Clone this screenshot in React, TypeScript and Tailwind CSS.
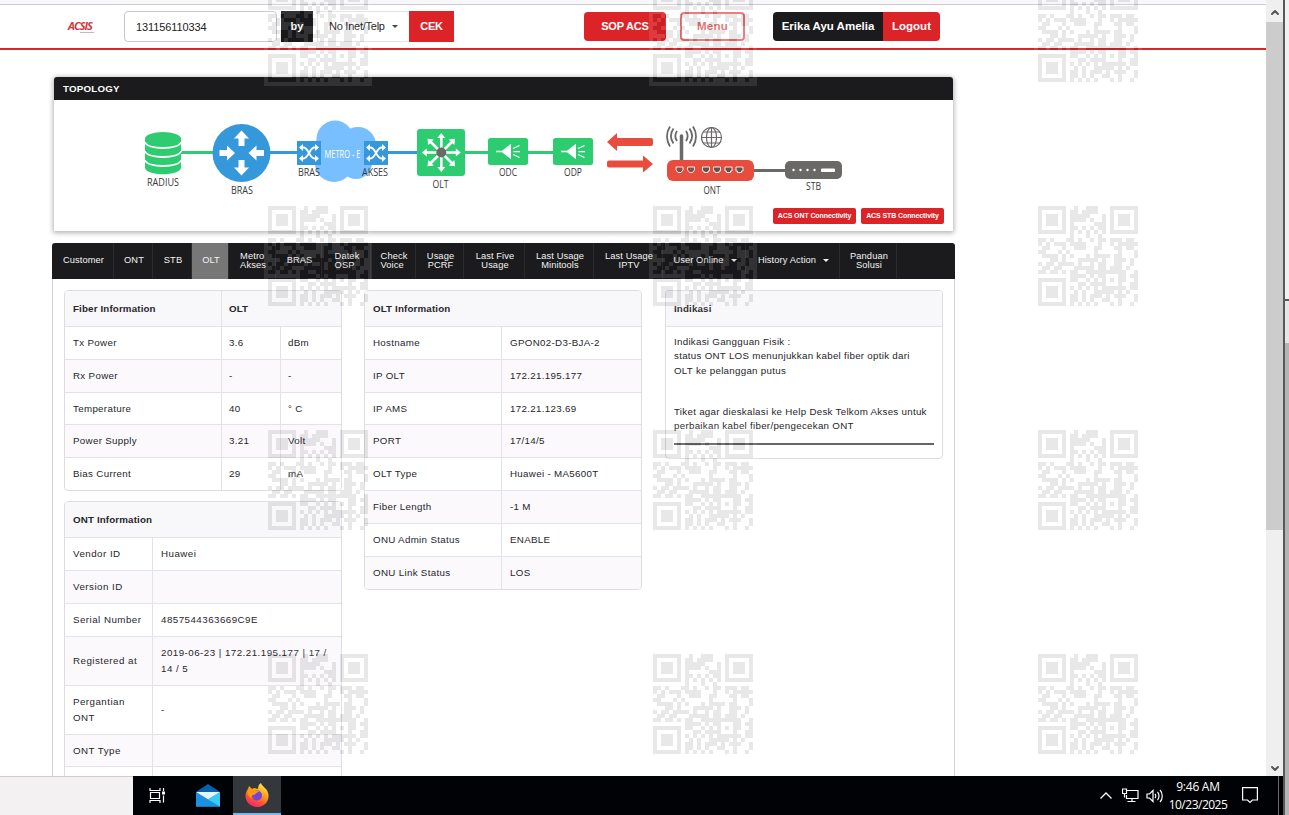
import { ReactNode } from 'react';
import { ChevronDown, ChevronUp } from 'lucide-react';

const QR_ROWS = [
  '1111111001001110001111111',
  '1000001011011110001000001',
  '1011101011111000101011101',
  '1011101011110100101011101',
  '1011101010000011101011101',
  '1000001011010101101000001',
  '1111111010101010101111111',
  '0000000010001001000000000',
  '1101000110100101101110110',
  '1010111011110001001011111',
  '0110001001110011000110110',
  '1100010100000010000010001',
  '0111101010001011110110001',
  '0001101000111110100111010',
  '1011011110100101100110010',
  '0110110001111101101110100',
  '1101101011001111111111001',
  '0000000011110101100011011',
  '1111111011001010101011001',
  '1000001000110111100010011',
  '1011101010101010111111011',
  '1011101001010011111010100',
  '1011101011010111010111001',
  '1000001011010100110010001',
  '1111111010101010001010010',
];

const QR_SPOTS = [-22, 202, 426, 650].flatMap((top) =>
  [264, 649, 1034].map((left) => ({ left, top })),
);

const QR_PATH = QR_ROWS.map((row, y) =>
  row
    .split('')
    .map((c, x) => (c === '1' ? `M${x + 1} ${y + 1}h1v1h-1z` : ''))
    .join(''),
).join('');

function QrMark({ left, top }: { left: number; top: number }) {
  return (
    <svg
      className="absolute h-[108px] w-[108px]"
      style={{ left, top }}
      viewBox="0 0 27 27"
      shapeRendering="crispEdges"
      aria-hidden="true"
    >
      <path d={`M0 0h27v27h-27z${QR_PATH}`} fill="#fff" fillOpacity="0.1" fillRule="evenodd" />
      <path d={QR_PATH} fill="#000" fillOpacity="0.09" />
    </svg>
  );
}

function Header() {
  return (
    <header className="flex h-[45px] shrink-0 items-start border-b-2 border-[#dc2428] pt-[6px] text-[#222]">
      <div className="ml-[68px] mt-[9px] flex h-4 w-[56px] flex-col">
        <span className="text-[11px] leading-[12px] font-bold italic tracking-[-1px] text-[#cf3a3e] font-['Open_Sans',sans-serif]">
          ACSIS
        </span>
        <span className="ml-3 h-px w-[14px] bg-[#c9b5b5]" />
      </div>
      <input
        className="h-[31px] w-[153px] rounded-[4px] border border-[#c8c7cc] bg-white px-[11px] text-[11px] tracking-[-0.1px] outline-none"
        defaultValue="131156110334"
      />
      <div className="ml-[4px] flex h-[31px] w-8 items-center justify-center bg-[#1b1b1d] text-[11px] font-bold text-white">
        by
      </div>
      <button className="ml-[4px] flex h-[31px] w-[92px] items-center border border-r-0 border-[#e3e2e5] pl-[11px] text-[11px] tracking-[-0.25px] whitespace-nowrap">
        No Inet/Telp
        <Caret className="ml-[7px] text-[#444]" />
      </button>
      <button className="h-[31px] w-[45px] bg-[#dc2428] text-[11px] font-bold tracking-[-0.3px] text-white">CEK</button>
      <button className="ml-[130px] mt-px h-[29px] w-[82px] rounded-[4px] bg-[#dc2428] text-[11px] font-bold tracking-[-0.2px] text-white">
        SOP ACS
      </button>
      <button className="ml-[14px] mt-px h-[29px] w-[65px] rounded-[4px] border-2 border-[#ea7072] text-[11.500px] font-bold tracking-[0.2px] text-[#e2696b]">
        Menu
      </button>
      <div className="ml-[28px] mt-px flex h-[29px] items-center overflow-hidden rounded-[4px] text-[11.500px] font-bold text-white">
        <span className="flex h-full w-[110px] items-center justify-center bg-[#1b1b1d]">
          Erika Ayu Amelia
        </span>
        <span className="flex h-full w-[57px] items-center justify-center bg-[#dc2428]">Logout</span>
      </div>
    </header>
  );
}

function Caret({ className }: { className?: string }) {
  return (
    <svg className={`h-[3px] w-[6px] ${className}`} viewBox="0 0 6 3" fill="currentColor">
      <path d="M0 0h6L3 3z" />
    </svg>
  );
}

function Label({ x, y, w, children, fill = '#38383d' }: { x: number; y: number; w: number; children: string; fill?: string }) {
  return (
    <text x={x} y={y} textLength={w} lengthAdjust="spacingAndGlyphs" fontSize="10" fill={fill} fontFamily="Open Sans, sans-serif">
      {children}
    </text>
  );
}

function Shuffle({ x }: { x: number }) {
  return (
    <g transform={`translate(${x} 141)`}>
      <rect width="24" height="24" fill="#3498db" />
      <g fill="none" stroke="#fff" strokeWidth="1.800">
        <path d="M4 6.500h2.500c5 0 6 11 11 11H19M4 17.500h2.500c5 0 6-11 11-11H19" />
      </g>
      <path d="M18 3l4 3.500-4 3.500zM18 14l4 3.500-4 3.500zM6 3L2 6.500 6 10zM6 14l-4 3.500L6 21z" fill="#fff" />
    </g>
  );
}

function Splitter({ x }: { x: number }) {
  return (
    <g transform={`translate(${x} 138)`}>
      <rect width="40" height="27" rx="2.500" fill="#2ecc71" />
      <path d="M8 12.800h6l9-7v15.400l-9-7H8z" fill="#fff" />
      <path d="M25 10.500l6.500-3M25.500 13.700h6.500M25 16.500l6.500 3" stroke="#fff" strokeWidth="1.300" />
    </g>
  );
}

function TopologyMap() {
  return (
    <svg className="block h-[131px] w-[899px]" viewBox="54 100 899 131">
      <g strokeWidth="3">
        <path d="M180 152.500h35M460 152.500h98" stroke="#2ecc71" />
        <path d="M268 152.500h150" stroke="#3498db" />
        <path d="M752 170.500h36" stroke="#6b6868" />
      </g>

      <path d="M145 138.500v29c0 9 36 9 36 0v-29z" fill="#2ecc71" />
      <ellipse cx="163" cy="139" rx="18" ry="7" fill="#2ecc71" />
      <g fill="none" stroke="#fff" strokeWidth="1.800">
        <path d="M145 142c1 8 35 8 36 0M145 151c1 8 35 8 36 0M145 160c1 8 35 8 36 0" />
      </g>
      <Label x={147} y={185.5} w={32}>RADIUS</Label>

      <circle cx="241.500" cy="153" r="29" fill="#3498db" />
      <g fill="#fff">
        {[
          'M241.500 130.500l7.500 8h-4.500v7.500h-6v-7.500H234z',
          'M241.500 175.500l7.500-8h-4.500V160h-6v7.500H234z',
          'M235 153l-8-7.500v4.500h-7.500v6h7.500v4.500z',
          'M248.500 153l8-7.500v4.500h7.500v6h-7.500v4.500z',
        ].map((d) => (
          <path key={d} d={d} />
        ))}
      </g>
      <Label x={231} y={194} w={22}>BRAS</Label>

      <g fill="#77bfff">
        <circle cx="335" cy="139" r="18.500" />
        <circle cx="358" cy="145" r="18" />
        <circle cx="334" cy="163" r="19" />
        <circle cx="356" cy="163" r="16" />
        <circle cx="374" cy="153" r="12" />
        <circle cx="322" cy="152" r="13" />
      </g>
      <Shuffle x={297} />
      <Shuffle x={364} />
      <Label x={324.5} y={157.5} w={36} fill="#fff">METRO - E</Label>
      <Label x={298} y={176} w={22}>BRAS</Label>
      <Label x={362} y={176} w={26}>AKSES</Label>

      <rect x="417" y="129" width="48" height="47" rx="3" fill="#2ecc71" />
      {[0, 45, 90, 135, 180, 225, 270, 315].map((deg) => (
        <g key={deg} transform={`rotate(${deg} 441.300 152.500)`}>
          <path d="M440 152v-14h-2.700l4-5 4 5h-2.700v14z" fill="#fff" />
        </g>
      ))}
      <circle cx="441.300" cy="152.500" r="5" fill="#6b6868" />
      <Label x={432.5} y={188} w={16}>OLT</Label>

      <Splitter x={488} />
      <Label x={499} y={176} w={18}>ODC</Label>
      <Splitter x={553} />
      <Label x={564} y={176} w={18}>ODP</Label>

      <path d="M607 142l10-9v5h34a2 2 0 0 1 2 2v4a2 2 0 0 1-2 2h-34v5z" fill="#e74c3c" />
      <path d="M653 164l-10-8.500v5h-34a2 2 0 0 0-2 2v3a2 2 0 0 0 2 2h34v5z" fill="#e74c3c" />

      <g fill="none" stroke="#6b6868" strokeWidth="1.800">
        <path d="M681.500 136v25" strokeWidth="3.500" strokeLinecap="round" />
        <path d="M677 131c-2 3-2 7 0 10M686 131c2 3 2 7 0 10M673.500 128.500c-3.500 5-3.500 10 0 15M689.500 128.500c3.500 5 3.500 10 0 15M670 126.500c-4 6-4 14 0 20M693 126.500c4 6 4 14 0 20" />
        <g strokeWidth="1.200">
          <circle cx="711.500" cy="137.500" r="10" />
          <ellipse cx="711.500" cy="137.500" rx="5" ry="10" />
          <path d="M711.500 127.500v20M701.500 137.500h20M703 132h17M703 143h17" />
        </g>
      </g>
      <rect x="667" y="160" width="87" height="21" rx="6" fill="#e74c3c" />
      {[676, 687.5].map((x) => (
        <path key={x} d={`M${x} 167h7v3l-2 2.500h-3l-2-2.500z`} fill="#8d4d45" stroke="#f6e9e7" />
      ))}
      {[702.5, 713.5, 725, 736].map((x) => (
        <path key={x} d={`M${x} 167h7v4h-1.500v1.500h-4V171h-1.500z`} fill="#66504c" stroke="#f6e9e7" />
      ))}
      <Label x={703.5} y={194} w={17}>ONT</Label>

      <rect x="785" y="161" width="57" height="18" rx="5" fill="#6b6868" />
      {[793.5, 800.5, 807.5, 814.5].map((x) => (
        <circle key={x} cx={x} cy="170" r="1.200" fill="#fff" />
      ))}
      <rect x="821" y="168.500" width="14" height="3.500" rx="1" fill="#fff" />
      <Label x={806} y={190} w={15}>STB</Label>
    </svg>
  );
}

function TopologyPanel() {
  return (
    <section className="ml-[54px] mt-[27px] w-[899px] shrink-0 rounded-t-[3px] bg-white shadow-[0_1px_5px_1px_rgba(0,0,0,0.3)]">
      <h2 className="flex h-[23px] items-center rounded-t-[3px] bg-[#1b1b1d] px-[9px] pt-[2px] text-[9.750px] font-bold tracking-[0.2px] text-white">
        TOPOLOGY
      </h2>
      <div className="relative">
        <TopologyMap />
        <div className="absolute right-[9px] bottom-[7px] flex gap-[5px]">
          {['ACS ONT Connectivity', 'ACS STB Connectivity'].map((text) => (
            <button
              key={text}
              className="h-4 w-[83px] rounded-[2px] bg-[#dc2428] text-[7px] font-bold tracking-[-0.1px] whitespace-nowrap text-white"
            >
              {text}
            </button>
          ))}
        </div>
      </div>
    </section>
  );
}

const TABS = [
  { text: 'Customer', size: 'w-[62px]' },
  { text: 'ONT', size: 'w-[39px]' },
  { text: 'STB', size: 'w-[39px]' },
  { text: 'OLT', size: 'w-[37px]', active: true },
  { text: 'Metro\nAkses', size: 'w-[47px]', left: true },
  { text: 'BRAS', size: 'w-[46px]' },
  { text: 'Datek\nOSP', size: 'w-[49px]', left: true },
  { text: 'Check\nVoice', size: 'w-[45px]', left: true },
  { text: 'Usage\nPCRF', size: 'w-[48px]' },
  { text: 'Last Five\nUsage', size: 'w-[61px]' },
  { text: 'Last Usage\nMinitools', size: 'w-[69px]' },
  { text: 'Last Usage\nIPTV', size: 'w-[69px]' },
  { text: 'User Online', size: 'w-[83px]', menu: true },
  { text: 'History Action', size: 'w-[94px]', menu: true },
  { text: 'Panduan\nSolusi', size: 'w-[57px]' },
];

function Tabs() {
  return (
    <nav className="flex h-[36px] w-[903px] shrink-0 overflow-hidden rounded-t-[3px] bg-[#1b1b1d] text-[9.300px] leading-[9px] tracking-[0.1px] text-[#f3f3f3]">
      {TABS.map((tab) => (
        <a
          key={tab.text}
          className={`flex h-full shrink-0 items-center justify-center border-r border-[#2b2b2d] pb-px pl-[2px] whitespace-pre ${tab.size} ${
            tab.active ? 'bg-[#777]' : ''
          } ${tab.left ? 'text-left' : 'text-center'}`}
        >
          {tab.text}
          {tab.menu && <Caret className="ml-[7px]" />}
        </a>
      ))}
    </nav>
  );
}

function Card({ children, className = '' }: { children: ReactNode; className?: string }) {
  return (
    <div className={`overflow-hidden rounded-[4px] border border-[#dddce1] ${className}`}>{children}</div>
  );
}

function CardTitle({ children }: { children: ReactNode }) {
  return <div className="flex h-[35px] items-center bg-[#f8f7fa] px-2 pt-[2px] font-bold tracking-[0.150px]">{children}</div>;
}

interface RowProps {
  cells: string[];
  columns: string;
  height?: string;
  striped: boolean;
}

function Row({ cells, columns, height = 'h-[32.83px]', striped }: RowProps) {
  return (
    <div className={`grid border-t border-[#e3e2e6] ${columns} ${height} ${striped ? 'bg-[#fbf9fc]' : ''}`}>
      {cells.map((cell, i) => (
        <div
          key={i}
          className={`flex items-center leading-4 whitespace-pre ${i ? 'border-l border-[#e3e2e6]' : ''} ${
            i && cells.length === 3 ? 'pl-[7px]' : 'pl-2'
          }`}
        >
          {cell}
        </div>
      ))}
    </div>
  );
}

const FIBER = [
  ['Tx Power', '3.6', 'dBm'],
  ['Rx Power', '-', '-'],
  ['Temperature', '40', '° C'],
  ['Power Supply', '3.21', 'Volt'],
  ['Bias Current', '29', 'mA'],
];

const ONT = [
  { cells: ['Vendor ID', 'Huawei'] },
  { cells: ['Version ID', ''] },
  { cells: ['Serial Number', '4857544363669C9E'] },
  { cells: ['Registered at', '2019-06-23 | 172.21.195.177 | 17 /\n14 / 5'], height: 'h-[49px]' },
  { cells: ['Pergantian\nONT', '-'], height: 'h-[49px]' },
  { cells: ['ONT Type', ''] },
  { cells: ['', ''] },
];

const OLT = [
  ['Hostname', 'GPON02-D3-BJA-2'],
  ['IP OLT', '172.21.195.177'],
  ['IP AMS', '172.21.123.69'],
  ['PORT', '17/14/5'],
  ['OLT Type', 'Huawei - MA5600T'],
  ['Fiber Length', '-1 M'],
  ['ONU Admin Status', 'ENABLE'],
  ['ONU Link Status', 'LOS'],
];

function OltPanel() {
  return (
    <div className="flex w-[903px] grow items-start gap-[23px] border-x border-[#d2d1d6] pt-[11px] pl-[11px] text-[9.750px] tracking-[0.320px] text-[#26262a]">
      <div className="flex w-[278px] flex-col gap-[10px]">
        <Card>
          <div className="grid grid-cols-[156px_1fr] bg-[#f8f7fa]">
            <CardTitle>Fiber Information</CardTitle>
            <div className="flex items-center border-l border-[#e3e2e6] pt-[2px] pl-[7px] font-bold tracking-[0.100px]">OLT</div>
          </div>
          {FIBER.map((cells, i) => (
            <Row key={cells[0]} cells={cells} columns="grid-cols-[156px_59px_1fr]" striped={i % 2 === 1} />
          ))}
        </Card>
        <Card className="tracking-[0.470px]">
          <CardTitle>ONT Information</CardTitle>
          {ONT.map((row, i) => (
            <Row key={i} {...row} columns="grid-cols-[87px_1fr]" striped={i % 2 === 1} />
          ))}
        </Card>
      </div>
      <Card className="-ml-px w-[278px]">
        <CardTitle>OLT Information</CardTitle>
        {OLT.map((cells, i) => (
          <Row key={cells[0]} cells={cells} columns="grid-cols-[136px_1fr]" striped={i % 2 === 1} />
        ))}
      </Card>
      <Card className="w-[278px]">
        <CardTitle>Indikasi</CardTitle>
        <div className="h-[132px] border-t border-[#e3e2e6] px-2 pt-[8px] leading-[14.300px] tracking-[0.280px]">
          <p>Indikasi Gangguan Fisik :</p>
          <p className="whitespace-nowrap">
            status ONT LOS menunjukkan kabel fiber optik dari
            <br />
            OLT ke pelanggan putus
          </p>
          <p className="mt-[27px] whitespace-nowrap">
            Tiket agar dieskalasi ke Help Desk Telkom Akses untuk
            <br />
            perbaikan kabel fiber/pengecekan ONT
          </p>
          <hr className="mt-[10px] border-t-2 border-[#656468]" />
        </div>
      </Card>
    </div>
  );
}

function Scrollbar() {
  return (
    <div className="flex w-[17px] shrink-0 flex-col items-center bg-[#f0eff0] pt-[4px] text-[#555]">
      <ChevronUp className="mb-px h-[17px] w-3" strokeWidth={4} />
      <div className="h-[508px] w-full bg-[#cdcccd]" />
      <ChevronDown className="mt-auto -mb-px h-[17px] w-3" strokeWidth={4} />
    </div>
  );
}

function Taskbar() {
  return (
    <footer className="flex h-[39px] w-full shrink-0 bg-[#010205] text-white">
      <div className="w-[133px] border-t border-[#cfcdce] bg-[#f3f1f2]" />
      <div className="flex w-[50px] items-center justify-center pr-[2px]">
        <svg className="h-[17px] w-[17px]" viewBox="0 0 17 17" fill="none" stroke="#fff" strokeWidth="1.200">
          <path d="M1 1v2.500h10V1M1 16v-2.500h10V16M1.500 5.500h9v6h-9zM14.500 1v3M14.500 8.500v7" />
          <path d="M13 4.500h3v3h-3z" fill="#fff" stroke="none" />
        </svg>
      </div>
      <div className="flex w-[50px] items-center justify-center">
        <svg className="h-[23px] w-6" viewBox="0 0 24 23">
          <path d="M0 8L12 0l12 8v4H0z" fill="#0861ae" />
          <path d="M1 8h22v8H1z" fill="#e9f3fb" />
          <path d="M0 8l12 8L0 22z" fill="#209de6" />
          <path d="M24 8L0 22.500h24z" fill="#35c3f5" />
          <path d="M0 8l24 14.500H0z" fill="#1b91df" />
          <path d="M24 8L12 15.300 24 22.500z" fill="#3bcaf7" />
        </svg>
      </div>
      <div className="flex w-12 items-center justify-center border-b-2 border-[#76b9ed] bg-[#34373b]">
        <svg className="h-6 w-6" viewBox="0 0 24 24">
          <defs>
            <linearGradient id="fox" x1="0.800" y1="0" x2="0.300" y2="1">
              <stop offset="0" stopColor="#fff14f" />
              <stop offset="0.400" stopColor="#ffa31f" />
              <stop offset="0.750" stopColor="#ff4b39" />
              <stop offset="1" stopColor="#e3267c" />
            </linearGradient>
          </defs>
          <path d="M3 6l1-3 3 3 2-1 4 1c0-3 1-5 3-6 1 4 7 5 7.500 12 .5 7-5 12-11.500 12S.5 19 .5 13c0-3 1-5 2.500-7z" fill="url(#fox)" />
          <circle cx="12" cy="12.500" r="5" fill="#7544d4" />
          <path d="M3 6c3-1 5 0 7 2h4c-1 2-4 2-4 4-2-1-5 1-3 4-4-2-5-6-4-10z" fill="#ff980e" />
        </svg>
      </div>
      <div className="ml-auto flex items-center font-['Open_Sans',sans-serif]">
        <svg className="h-[7px] w-3" viewBox="0 0 12 7" fill="none" stroke="#fff" strokeWidth="1.300">
          <path d="M.5 6.500L6 1l5.500 5.500" />
        </svg>
        <svg className="ml-[10px] h-[15px] w-[17px]" viewBox="0 0 17 15" fill="none" stroke="#fff" strokeWidth="1.200">
          <path d="M5 2.500h11v8H4.500V7M10 10.500v3M5.500 13.500h8M.5 1h4v4.500h-4zM2.500 5.500v4" />
        </svg>
        <svg className="ml-[7px] h-[14px] w-[17px]" viewBox="0 0 17 14" fill="none" stroke="#fff" strokeWidth="1.200">
          <path d="M1 5h2.500L7 1.500v11L3.500 9H1zM9 5c1 1 1 3 0 4M11.500 3c2 2 2 6 0 8M14 1c3 3 3 9 0 12" />
        </svg>
        <div className="ml-[5px] flex w-[60px] flex-col items-center text-[12px] leading-[18px] whitespace-nowrap">
          <span className="tracking-[-0.250px]">9:46 AM</span>
          <span className="tracking-[-0.500px]">10/23/2025</span>
        </div>
        <svg className="ml-[14px] h-[17px] w-4" viewBox="0 0 16 17" fill="none" stroke="#fff" strokeWidth="1.200">
          <path d="M.6.600h14.800v12.400h-4.900L8 15.500 5.500 13H.6z" />
        </svg>
        <div className="ml-[20px] h-[39px] w-px bg-[#66676a]" />
        <div className="h-[39px] w-1" />
      </div>
    </footer>
  );
}

export default function App() {
  return (
    <div className="relative flex h-[815px] w-[1289px] overflow-hidden bg-white font-['Liberation_Sans',Arial,sans-serif]">
      <div className="flex w-[1283px] shrink-0 flex-col">
        <div className="flex h-[776px] shrink-0 overflow-hidden">
          <main className="flex w-[1266px] shrink-0 flex-col">
            <div className="h-[5px] shrink-0 border-b border-[#cccbd0] bg-[#f8f7fa]" />
            <Header />
            <TopologyPanel />
            <div className="mt-[12px] ml-[52px] flex grow flex-col overflow-hidden">
              <Tabs />
              <OltPanel />
            </div>
          </main>
          <Scrollbar />
        </div>
        <Taskbar />
      </div>
      <div className="flex grow flex-col border-l-2 border-[#59595b] bg-[#e6e6e6]">
        <div className="h-[301px] border-b-2 border-[#59595b] bg-[#f1f1f1]" />
        <div className="mt-[42px] grow bg-[#b4b4b4]" />
      </div>

      <div className="pointer-events-none absolute inset-0 overflow-hidden">
        {QR_SPOTS.map((spot) => (
          <QrMark key={`${spot.left}-${spot.top}`} {...spot} />
        ))}
      </div>
    </div>
  );
}
